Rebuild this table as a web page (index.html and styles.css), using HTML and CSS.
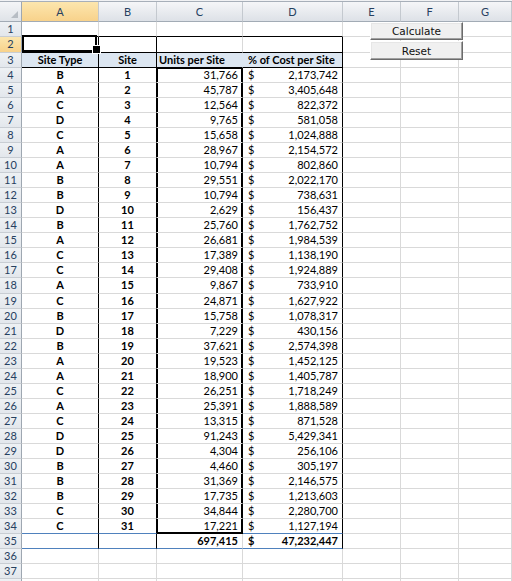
FILE: index.html
```html
<!DOCTYPE html>
<html>
<head>
<meta charset="utf-8">
<link rel="stylesheet" href="styles.css">
</head>
<body>
<div class="sheet">
  <div class="topbar"></div>
  <div class="row head">
    <div class="c corner"></div>
    <div class="c ch sel">A</div>
    <div class="c ch">B</div>
    <div class="c ch">C</div>
    <div class="c ch">D</div>
    <div class="c ch">E</div>
    <div class="c ch">F</div>
    <div class="c ch">G</div>
  </div>
  <div class="row"><div class="c rh">1</div><div class="c bb"></div><div class="c bb"></div><div class="c bb"></div><div class="c bb"></div><div class="c"></div><div class="c"></div><div class="c"></div></div>
  <div class="row tall"><div class="c rh sel">2</div><div class="c rb bb active"></div><div class="c rb bb"></div><div class="c bb"></div><div class="c rb bb"></div><div class="c"></div><div class="c"></div><div class="c"></div></div>
  <div class="row"><div class="c rh">3</div><div class="c hd ctr rb bb">Site Type</div><div class="c hd ctr rb bb">Site</div><div class="c hd nr bb lbl">Units per Site</div><div class="c hd rb bb lbl2">% of Cost per Site</div><div class="c"></div><div class="c"></div><div class="c"></div></div>
  <div class="row"><div class="c rh">4</div><div class="c ctr b rb">B</div><div class="c ctr b rb">1</div><div class="c num box top">31,766</div><div class="c cur rb"><span>$</span><span>2,173,742</span></div><div class="c"></div><div class="c"></div><div class="c"></div></div>
  <div class="row"><div class="c rh">5</div><div class="c ctr b rb">A</div><div class="c ctr b rb">2</div><div class="c num box">45,787</div><div class="c cur rb"><span>$</span><span>3,405,648</span></div><div class="c"></div><div class="c"></div><div class="c"></div></div>
  <div class="row"><div class="c rh">6</div><div class="c ctr b rb">C</div><div class="c ctr b rb">3</div><div class="c num box">12,564</div><div class="c cur rb"><span>$</span><span>822,372</span></div><div class="c"></div><div class="c"></div><div class="c"></div></div>
  <div class="row"><div class="c rh">7</div><div class="c ctr b rb">D</div><div class="c ctr b rb">4</div><div class="c num box">9,765</div><div class="c cur rb"><span>$</span><span>581,058</span></div><div class="c"></div><div class="c"></div><div class="c"></div></div>
  <div class="row"><div class="c rh">8</div><div class="c ctr b rb">C</div><div class="c ctr b rb">5</div><div class="c num box">15,658</div><div class="c cur rb"><span>$</span><span>1,024,888</span></div><div class="c"></div><div class="c"></div><div class="c"></div></div>
  <div class="row"><div class="c rh">9</div><div class="c ctr b rb">A</div><div class="c ctr b rb">6</div><div class="c num box">28,967</div><div class="c cur rb"><span>$</span><span>2,154,572</span></div><div class="c"></div><div class="c"></div><div class="c"></div></div>
  <div class="row"><div class="c rh">10</div><div class="c ctr b rb">A</div><div class="c ctr b rb">7</div><div class="c num box">10,794</div><div class="c cur rb"><span>$</span><span>802,860</span></div><div class="c"></div><div class="c"></div><div class="c"></div></div>
  <div class="row"><div class="c rh">11</div><div class="c ctr b rb">B</div><div class="c ctr b rb">8</div><div class="c num box">29,551</div><div class="c cur rb"><span>$</span><span>2,022,170</span></div><div class="c"></div><div class="c"></div><div class="c"></div></div>
  <div class="row"><div class="c rh">12</div><div class="c ctr b rb">B</div><div class="c ctr b rb">9</div><div class="c num box">10,794</div><div class="c cur rb"><span>$</span><span>738,631</span></div><div class="c"></div><div class="c"></div><div class="c"></div></div>
  <div class="row"><div class="c rh">13</div><div class="c ctr b rb">D</div><div class="c ctr b rb">10</div><div class="c num box">2,629</div><div class="c cur rb"><span>$</span><span>156,437</span></div><div class="c"></div><div class="c"></div><div class="c"></div></div>
  <div class="row"><div class="c rh">14</div><div class="c ctr b rb">B</div><div class="c ctr b rb">11</div><div class="c num box">25,760</div><div class="c cur rb"><span>$</span><span>1,762,752</span></div><div class="c"></div><div class="c"></div><div class="c"></div></div>
  <div class="row"><div class="c rh">15</div><div class="c ctr b rb">A</div><div class="c ctr b rb">12</div><div class="c num box">26,681</div><div class="c cur rb"><span>$</span><span>1,984,539</span></div><div class="c"></div><div class="c"></div><div class="c"></div></div>
  <div class="row"><div class="c rh">16</div><div class="c ctr b rb">C</div><div class="c ctr b rb">13</div><div class="c num box">17,389</div><div class="c cur rb"><span>$</span><span>1,138,190</span></div><div class="c"></div><div class="c"></div><div class="c"></div></div>
  <div class="row"><div class="c rh">17</div><div class="c ctr b rb">C</div><div class="c ctr b rb">14</div><div class="c num box">29,408</div><div class="c cur rb"><span>$</span><span>1,924,889</span></div><div class="c"></div><div class="c"></div><div class="c"></div></div>
  <div class="row tall"><div class="c rh">18</div><div class="c ctr b rb">A</div><div class="c ctr b rb">15</div><div class="c num box">9,867</div><div class="c cur rb"><span>$</span><span>733,910</span></div><div class="c"></div><div class="c"></div><div class="c"></div></div>
  <div class="row"><div class="c rh">19</div><div class="c ctr b rb">C</div><div class="c ctr b rb">16</div><div class="c num box">24,871</div><div class="c cur rb"><span>$</span><span>1,627,922</span></div><div class="c"></div><div class="c"></div><div class="c"></div></div>
  <div class="row"><div class="c rh">20</div><div class="c ctr b rb">B</div><div class="c ctr b rb">17</div><div class="c num box">15,758</div><div class="c cur rb"><span>$</span><span>1,078,317</span></div><div class="c"></div><div class="c"></div><div class="c"></div></div>
  <div class="row"><div class="c rh">21</div><div class="c ctr b rb">D</div><div class="c ctr b rb">18</div><div class="c num box">7,229</div><div class="c cur rb"><span>$</span><span>430,156</span></div><div class="c"></div><div class="c"></div><div class="c"></div></div>
  <div class="row"><div class="c rh">22</div><div class="c ctr b rb">B</div><div class="c ctr b rb">19</div><div class="c num box">37,621</div><div class="c cur rb"><span>$</span><span>2,574,398</span></div><div class="c"></div><div class="c"></div><div class="c"></div></div>
  <div class="row"><div class="c rh">23</div><div class="c ctr b rb">A</div><div class="c ctr b rb">20</div><div class="c num box">19,523</div><div class="c cur rb"><span>$</span><span>1,452,125</span></div><div class="c"></div><div class="c"></div><div class="c"></div></div>
  <div class="row"><div class="c rh">24</div><div class="c ctr b rb">A</div><div class="c ctr b rb">21</div><div class="c num box">18,900</div><div class="c cur rb"><span>$</span><span>1,405,787</span></div><div class="c"></div><div class="c"></div><div class="c"></div></div>
  <div class="row"><div class="c rh">25</div><div class="c ctr b rb">C</div><div class="c ctr b rb">22</div><div class="c num box">26,251</div><div class="c cur rb"><span>$</span><span>1,718,249</span></div><div class="c"></div><div class="c"></div><div class="c"></div></div>
  <div class="row"><div class="c rh">26</div><div class="c ctr b rb">A</div><div class="c ctr b rb">23</div><div class="c num box">25,391</div><div class="c cur rb"><span>$</span><span>1,888,589</span></div><div class="c"></div><div class="c"></div><div class="c"></div></div>
  <div class="row"><div class="c rh">27</div><div class="c ctr b rb">C</div><div class="c ctr b rb">24</div><div class="c num box">13,315</div><div class="c cur rb"><span>$</span><span>871,528</span></div><div class="c"></div><div class="c"></div><div class="c"></div></div>
  <div class="row"><div class="c rh">28</div><div class="c ctr b rb">D</div><div class="c ctr b rb">25</div><div class="c num box">91,243</div><div class="c cur rb"><span>$</span><span>5,429,341</span></div><div class="c"></div><div class="c"></div><div class="c"></div></div>
  <div class="row"><div class="c rh">29</div><div class="c ctr b rb">D</div><div class="c ctr b rb">26</div><div class="c num box">4,304</div><div class="c cur rb"><span>$</span><span>256,106</span></div><div class="c"></div><div class="c"></div><div class="c"></div></div>
  <div class="row"><div class="c rh">30</div><div class="c ctr b rb">B</div><div class="c ctr b rb">27</div><div class="c num box">4,460</div><div class="c cur rb"><span>$</span><span>305,197</span></div><div class="c"></div><div class="c"></div><div class="c"></div></div>
  <div class="row"><div class="c rh">31</div><div class="c ctr b rb">B</div><div class="c ctr b rb">28</div><div class="c num box">31,369</div><div class="c cur rb"><span>$</span><span>2,146,575</span></div><div class="c"></div><div class="c"></div><div class="c"></div></div>
  <div class="row"><div class="c rh">32</div><div class="c ctr b rb">B</div><div class="c ctr b rb">29</div><div class="c num box">17,735</div><div class="c cur rb"><span>$</span><span>1,213,603</span></div><div class="c"></div><div class="c"></div><div class="c"></div></div>
  <div class="row"><div class="c rh">33</div><div class="c ctr b rb">C</div><div class="c ctr b rb">30</div><div class="c num box">34,844</div><div class="c cur rb"><span>$</span><span>2,280,700</span></div><div class="c"></div><div class="c"></div><div class="c"></div></div>
  <div class="row"><div class="c rh">34</div><div class="c ctr b rb bl">C</div><div class="c ctr b rb bl">31</div><div class="c num box bot bb">17,221</div><div class="c cur rb bl"><span>$</span><span>1,127,194</span></div><div class="c"></div><div class="c"></div><div class="c"></div></div>
  <div class="row"><div class="c rh">35</div><div class="c rb bl"></div><div class="c rb bl"></div><div class="c num b bl">697,415</div><div class="c cur b rb bl"><span>$</span><span>47,232,447</span></div><div class="c"></div><div class="c"></div><div class="c"></div></div>
  <div class="row"><div class="c rh">36</div><div class="c"></div><div class="c"></div><div class="c"></div><div class="c"></div><div class="c"></div><div class="c"></div><div class="c"></div></div>
  <div class="row"><div class="c rh">37</div><div class="c"></div><div class="c"></div><div class="c"></div><div class="c"></div><div class="c"></div><div class="c"></div><div class="c"></div></div>
  <div class="row"><div class="c rh"></div><div class="c"></div><div class="c"></div><div class="c"></div><div class="c"></div><div class="c"></div><div class="c"></div><div class="c"></div></div>

  <div class="buttons">
    <button class="btn btn-calc" type="button">Calculate</button>
    <button class="btn btn-reset" type="button">Reset</button>
  </div>
</div>
</body>
</html>
```

FILE: styles.css
```css
* { box-sizing: border-box; }

html, body {
  margin: 0;
  padding: 0;
  background: #ffffff;
}

body {
  width: 512px;
  height: 581px;
  overflow: hidden;
  font-family: Lato, "Liberation Sans", sans-serif;
  font-size: 11px;
  color: #000;
}

.sheet {
  position: relative;
}

.topbar {
  height: 2px;
  border-top: 1px solid #f1f2f4;
  border-bottom: 1px solid #a7afb9;
}

.row {
  display: grid;
  grid-template-columns: 22px 77px 58px 86px 100px 58px 58px 1fr;
  height: 15px;
}

.row.tall { height: 16px; }
.row.head { height: 20px; }

.c {
  border-right: 1px solid #d9d9d9;
  border-bottom: 1px solid #d9d9d9;
  line-height: 14px;
  padding: 0 3px;
  white-space: nowrap;
}

/* headers */
.corner {
  position: relative;
  background: linear-gradient(#f4f5f7, #dfe3e8);
  border-right: 1px solid #9ea7b1;
  border-bottom: 1px solid #a2abb5;
}
.corner::after {
  content: "";
  position: absolute;
  right: 3px;
  bottom: 3px;
  width: 0;
  height: 0;
  border-left: 7px solid transparent;
  border-bottom: 7px solid #b7bdc4;
}

.ch {
  background: linear-gradient(#f5f6f8, #dde1e7);
  border-right: 1px solid #c4c9cf;
  border-bottom: 1px solid #a2abb5;
  text-align: center;
  line-height: 19px;
  color: #26405f;
}

.rh {
  background: linear-gradient(#eef1f4, #e3e7ec);
  border-right: 1px solid #9ea7b1;
  border-bottom: 1px solid #c8cdd3;
  text-align: center;
  color: #26405f;
  padding: 0;
}

.ch.sel, .rh.sel {
  background: linear-gradient(#fce6ae, #f8d28b);
}

/* borders */
.rb { border-right-color: #000; }
.bb { border-bottom-color: #000; }
.bl { border-bottom-color: #4f81bd; }
.nr { border-right-color: #dce6f1; }

/* content */
.hd {
  background: #dce6f1;
  font-weight: 700;
}
.lbl { padding-left: 2px; }
.lbl2 { padding-left: 5px; }

.ctr { text-align: center; }
.b { font-weight: 700; }

.num {
  text-align: right;
  padding-right: 4px;
}

.cur {
  display: flex;
  justify-content: space-between;
  padding: 0 4px 0 5px;
}

.box {
  border-right-color: #000;
  box-shadow: inset 1px 0 0 #000, inset -1px 0 0 #000;
}
.box.top {
  box-shadow: inset 1px 0 0 #000, inset -1px 0 0 #000, inset 0 1px 0 #000;
}
.box.bot {
  box-shadow: inset 1px 0 0 #000, inset -1px 0 0 #000, inset 0 -1px 0 #000;
}

/* active cell selection */
.active {
  position: relative;
}
.active::before {
  content: "";
  position: absolute;
  top: -2px;
  left: 0;
  right: 1px;
  bottom: 0;
  border: 2px solid #000;
  z-index: 2;
}
.active::after {
  content: "";
  position: absolute;
  right: -3px;
  bottom: -2px;
  width: 7px;
  height: 7px;
  background: #000;
  border: 1px solid #fff;
  z-index: 3;
}

/* form buttons floating over the sheet */
.buttons {
  position: absolute;
  left: 370px;
  top: 22px;
  width: 93px;
  display: flex;
  flex-direction: column;
  gap: 1px;
  z-index: 5;
}

.btn {
  margin: 0;
  padding: 0;
  width: 100%;
  font-family: "DejaVu Sans", Verdana, sans-serif;
  font-size: 10.5px;
  color: #111;
  background: #f0f0f0;
  border: 1px solid;
  border-color: #ffffff #6b6b6b #6b6b6b #ffffff;
  box-shadow: inset -1px -1px 0 #a0a0a0, inset 1px 1px 0 #e6e6e6;
  text-align: center;
}

.btn-calc { height: 18px; line-height: 15px; }
.btn-reset { height: 19px; line-height: 16px; }
```
